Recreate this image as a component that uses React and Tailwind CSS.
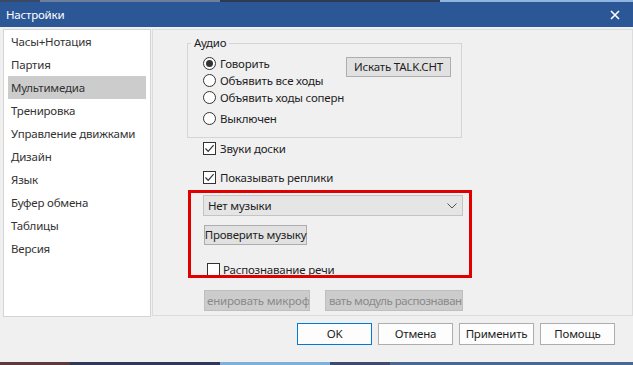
import { useState } from "react"

const FONT = { fontFamily: '"Segoe UI", "Noto Sans", "Open Sans", sans-serif' }

const PAGES = [
  "Часы+Нотация",
  "Партия",
  "Мультимедиа",
  "Тренировка",
  "Управление движками",
  "Дизайн",
  "Язык",
  "Буфер обмена",
  "Таблицы",
  "Версия",
]

const VOICE = ["Говорить", "Объявить все ходы", "Объявить ходы соперн"]

function Radio({ checked }) {
  return (
    <span className="flex h-[13px] w-[13px] shrink-0 items-center justify-center rounded-full border border-[#333] bg-white">
      {checked && <span className="h-[7px] w-[7px] rounded-full bg-[#333]" />}
    </span>
  )
}

function Checkbox({ checked }) {
  return (
    <span className="flex h-[13px] w-[13px] shrink-0 items-center justify-center border border-[#333] bg-white">
      {checked && (
        <svg width="11" height="11" viewBox="0 0 11 11">
          <path d="M1.5 5.5 L4.2 8.3 L9.6 2.2" fill="none" stroke="#333" strokeWidth="1.2" />
        </svg>
      )}
    </span>
  )
}

function WinButton({ children, className = "" }) {
  return (
    <button
      type="button"
      className={`flex items-center justify-center whitespace-nowrap border text-[11.5px] leading-none text-[#1e1e1e] ${className}`}
    >
      {children}
    </button>
  )
}

export default function App() {
  const [page, setPage] = useState(2)
  const [voice, setVoice] = useState(0)

  return (
    <div
      className="relative flex h-[365px] w-[633px] flex-col overflow-hidden whitespace-nowrap bg-[#f0f0f0] tracking-[-0.2px] text-[#1e1e1e]"
      style={FONT}
    >
      {/* desktop peeking above the dialog */}
      <div className="flex h-[2px]">
        <div className="w-[40px] bg-[#3a4a66]" />
        <div className="w-[180px] bg-[#6d7f9c]" />
        <div className="w-[220px] bg-[#2d3a52]" />
        <div className="flex-1 bg-[#8fb4e0]" />
      </div>

      <div className="flex h-[25px] items-center justify-between bg-[#2b5797] pl-[6px] pr-[13px] text-[11.5px] text-white">
        <span>Настройки</span>
        <svg width="10" height="10" viewBox="0 0 10 10">
          <path d="M1 1 L9 9 M9 1 L1 9" stroke="white" strokeWidth="1.6" />
        </svg>
      </div>

      <div className="flex items-start gap-[1px] pl-[3px] pt-[2px]">
        <div className="h-[288px] w-[148px] border border-[#d4d4d4] bg-white">
          {PAGES.map((name, i) => (
            <div
              key={name}
              onClick={() => setPage(i)}
              className={`mx-[4px] flex h-[23px] items-center px-[3px] text-[11.5px] text-[#333] ${
                page === i ? "bg-[#cccccc]" : ""
              }`}
            >
              {name}
            </div>
          ))}
        </div>

        <div className="relative h-[287px] flex-1 border border-[#dcdcdc] bg-[#f0f0f0]">
          <fieldset className="ml-[34px] mt-[5px] w-[275px] border border-[#d5d5d5] pb-[10px]">
            <legend className="ml-[3px] px-[3px] text-[11.5px] leading-[16px]">Аудио</legend>
            <div className="flex pl-[15px] pt-[4px]">
              <div className="flex w-[143px] flex-col text-[11.5px]">
                {VOICE.map((label, i) => (
                  <div key={label} onClick={() => setVoice(i)} className="flex h-[17px] items-center gap-[4px]">
                    <Radio checked={voice === i} />
                    <span>{label}</span>
                  </div>
                ))}
                <div onClick={() => setVoice(3)} className="mt-[4px] flex h-[17px] items-center gap-[4px]">
                  <Radio checked={voice === 3} />
                  <span>Выключен</span>
                </div>
              </div>
              <WinButton className="mt-[2px] h-[20px] w-[105px] border-[#adadad] bg-[#e1e1e1]">Искать TALK.CHT</WinButton>
            </div>
          </fieldset>

          <div className="flex flex-col pl-[50px] text-[11.5px]">
            <div className="mt-[2px] flex h-[17px] items-center gap-[4px]">
              <Checkbox checked />
              <span>Звуки доски</span>
            </div>
            <div className="mt-[12px] flex h-[17px] items-center gap-[4px]">
              <Checkbox checked />
              <span>Показывать реплики</span>
            </div>

            <div className="mt-[9px] flex h-[21px] w-[260px] items-center justify-between border border-[#c4c4c4] bg-[#e5e5e5] pl-[4px] pr-[5px]">
              <span>Нет музыки</span>
              <svg width="10" height="6" viewBox="0 0 10 6">
                <path d="M0.5 0.5 L5 5 L9.5 0.5" fill="none" stroke="#555" strokeWidth="1" />
              </svg>
            </div>

            <WinButton className="ml-[1px] mt-[9px] h-[20px] w-[103px] border-[#adadad] bg-[#e1e1e1]">Проверить музыку</WinButton>

            <div className="ml-[4px] mt-[16px] flex h-[17px] items-center gap-[3px]">
              <Checkbox />
              <span>Распознавание речи</span>
            </div>

            {/* disabled buttons: captions are wider than the buttons, only the visible part is shown */}
            <div className="ml-[1px] mt-[12px] flex gap-[15px] text-[#8a8a8a]">
              <div className="flex h-[21px] w-[106px] items-center overflow-hidden border border-[#bfbfbf] bg-[#cccccc] pl-[2px]">
                енировать микроф
              </div>
              <div className="flex h-[21px] w-[138px] items-center overflow-hidden border border-[#bfbfbf] bg-[#cccccc] pl-[3px] tracking-[-0.45px]">
                вать модуль распознаван
              </div>
            </div>
          </div>

          {/* annotation frame drawn over the music controls */}
          <div className="pointer-events-none absolute left-[35px] top-[160px] h-[88px] w-[284px] border-[3px] border-[#e00000]" />
        </div>
      </div>

      <div className="mt-[6px] flex justify-end gap-[6px] pr-[18px]">
        <WinButton className="h-[22px] w-[75px] border-[#0078d7] bg-[#fdfdfd]">OK</WinButton>
        <WinButton className="h-[22px] w-[75px] border-[#adadad] bg-[#fdfdfd]">Отмена</WinButton>
        <WinButton className="h-[22px] w-[75px] border-[#adadad] bg-[#fdfdfd]">Применить</WinButton>
        <WinButton className="h-[22px] w-[75px] border-[#adadad] bg-[#fdfdfd]">Помощь</WinButton>
      </div>

      <div className="mt-auto flex h-[3px]">
        <div className="w-[70px] bg-[#5a3a3a]" />
        <div className="w-[150px] bg-[#2e3a55]" />
        <div className="w-[110px] bg-[#7fb0d8]" />
        <div className="w-[60px] bg-[#3c4c6a]" />
        <div className="flex-1 bg-[#4a6890]" />
      </div>
    </div>
  )
}
